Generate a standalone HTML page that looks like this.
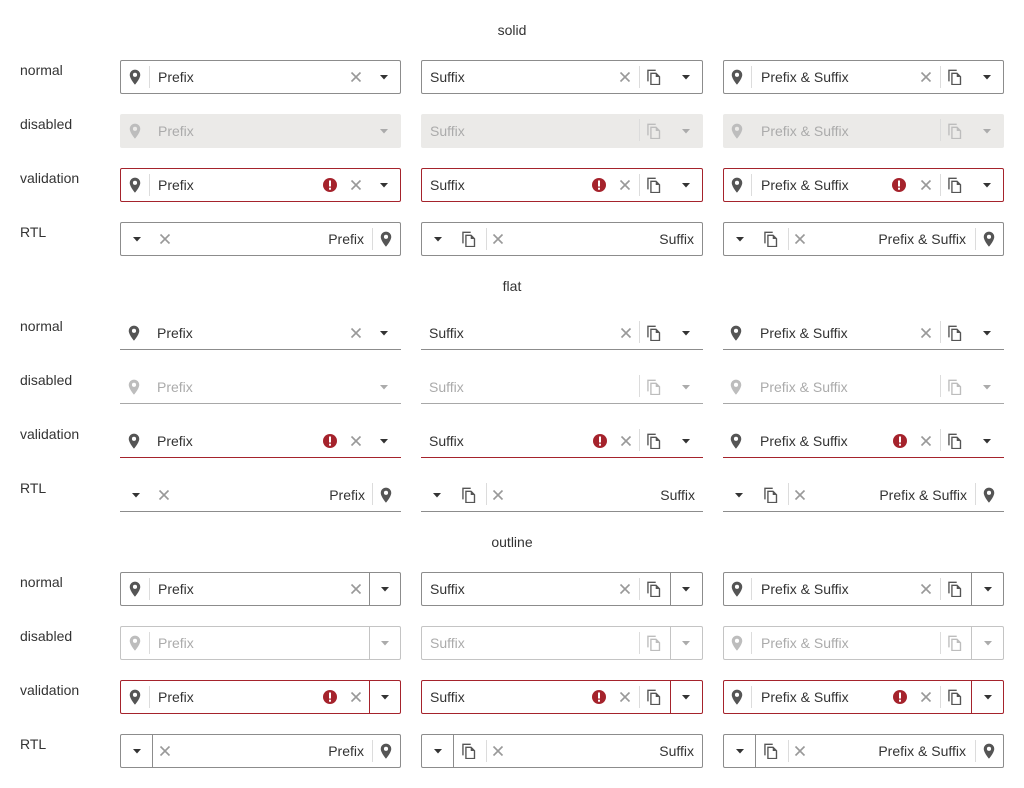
<!DOCTYPE html>
<html><head><meta charset="utf-8"><style>
body{margin:0;width:1024px;height:788px;background:#fff;font-family:"Liberation Sans",Arial,sans-serif;color:#333;position:relative;overflow:hidden}
.t{position:absolute;left:0;width:1024px;text-align:center;font-size:14px;line-height:16px}
.l{position:absolute;left:20px;font-size:14px;line-height:16px;color:#333}
.f{position:absolute;height:34px;box-sizing:border-box;font-size:14px}
.c1{left:120px;width:281px}.c2{left:421px;width:282px}.c3{left:723px;width:281px}
.solid{border:1px solid #8c8c8c;border-radius:2px}
.solid.d{border:none;background:#ebeae8}
.solid.d .tx{line-height:34px}
.solid.d svg{top:9px}
.flat{border-bottom:1px solid #8c8c8c}
.flat .tx{top:1px!important}
.flat svg{top:9px!important}
.flat.d{border-bottom-color:#a8a8a8}
.outline{border:1px solid #8c8c8c;border-radius:2px}
.outline.d{border-color:#c4c4c4}
.v{border-color:#a5232c!important}
.f svg{position:absolute;top:8px;width:16px;height:16px}
.f .tx{position:absolute;top:0;line-height:32px;white-space:nowrap}
.s{position:absolute;top:5px;height:22px;width:1px;background:#dcdcdc}
.S{position:absolute;top:0;bottom:0;width:1px;background:#8c8c8c}
.v .S{background:#a5232c}
.d .S{background:#c4c4c4}
.ic{color:#555}.xc{color:#999}.er{color:#a5232c}.ar{color:#333}
.d .ic,.d .xc,.d .ar,.d .tx{color:#ababab}
.d .ic{color:#bdbdbd}
</style></head><body>
<svg width="0" height="0" style="position:absolute">
<defs>
<symbol id="pin" viewBox="1 1 14 14"><path fill="currentColor" fill-rule="evenodd" d="M8 1.5a4.6 4.6 0 0 0-4.6 4.6c0 3.3 4.6 8.6 4.6 8.6s4.6-5.3 4.6-8.6A4.6 4.6 0 0 0 8 1.5zM8 4.3a1.8 1.8 0 1 1 0 3.6a1.8 1.8 0 1 1 0-3.6z"/></symbol>
<symbol id="x" viewBox="0 0 16 16"><path d="M3.5 3.5l9 9M12.5 3.5l-9 9" stroke="currentColor" stroke-width="1.6"/></symbol>
<symbol id="ar" viewBox="0 0 16 16"><path fill="currentColor" d="M4 6h8L8 10.5z"/></symbol>
<symbol id="cp" viewBox="1 1 14 14"><path fill="none" stroke="currentColor" stroke-width="1.2" d="M9.5 2.2H2.7v9.6M5.3 4.8h4.5l3 3v6.8H5.3z"/><path fill="currentColor" d="M9.5 4.8v3.2h3.2z"/></symbol>
<symbol id="er" viewBox="0 0 16 16"><circle cx="8" cy="8" r="7" fill="currentColor"/><rect x="7" y="3.5" width="2" height="6" fill="#fff"/><rect x="7" y="10.7" width="2" height="2" fill="#fff"/></symbol>
</defs></svg>

<div class="t" style="top:22px">solid</div>
<div class="t" style="top:278px">flat</div>
<div class="t" style="top:534px">outline</div>

<div class="l" style="top:62px">normal</div><div class="l" style="top:116px">disabled</div><div class="l" style="top:170px">validation</div><div class="l" style="top:224px">RTL</div>
<div class="l" style="top:318px">normal</div><div class="l" style="top:372px">disabled</div><div class="l" style="top:426px">validation</div><div class="l" style="top:480px">RTL</div>
<div class="l" style="top:574px">normal</div><div class="l" style="top:628px">disabled</div><div class="l" style="top:682px">validation</div><div class="l" style="top:736px">RTL</div>

<!-- ===== SOLID ===== -->
<div class="f solid c1" style="top:60px"><svg class="ic" style="left:6px"><use href="#pin"/></svg><span class="s" style="left:28px"></span><span class="tx" style="left:37px">Prefix</span><svg class="xc" style="left:227px"><use href="#x"/></svg><svg class="ar" style="left:255px"><use href="#ar"/></svg></div>
<div class="f solid c2" style="top:60px"><span class="tx" style="left:8px">Suffix</span><svg class="xc" style="left:195px"><use href="#x"/></svg><span class="s" style="left:217px"></span><svg class="ic" style="left:224px"><use href="#cp"/></svg><svg class="ar" style="left:256px"><use href="#ar"/></svg></div>
<div class="f solid c3" style="top:60px"><svg class="ic" style="left:5px"><use href="#pin"/></svg><span class="s" style="left:27px"></span><span class="tx" style="left:37px">Prefix &amp; Suffix</span><svg class="xc" style="left:194px"><use href="#x"/></svg><span class="s" style="left:216px"></span><svg class="ic" style="left:223px"><use href="#cp"/></svg><svg class="ar" style="left:255px"><use href="#ar"/></svg></div>

<div class="f solid d c1" style="top:114px"><svg class="ic" style="left:7px"><use href="#pin"/></svg><span class="tx" style="left:38px">Prefix</span><svg class="ar" style="left:256px"><use href="#ar"/></svg></div>
<div class="f solid d c2" style="top:114px"><span class="tx" style="left:9px">Suffix</span><span class="s" style="left:218px"></span><svg class="ic" style="left:225px"><use href="#cp"/></svg><svg class="ar" style="left:257px"><use href="#ar"/></svg></div>
<div class="f solid d c3" style="top:114px"><svg class="ic" style="left:6px"><use href="#pin"/></svg><span class="tx" style="left:38px">Prefix &amp; Suffix</span><span class="s" style="left:217px"></span><svg class="ic" style="left:224px"><use href="#cp"/></svg><svg class="ar" style="left:256px"><use href="#ar"/></svg></div>

<div class="f solid v c1" style="top:168px"><svg class="ic" style="left:6px"><use href="#pin"/></svg><span class="s" style="left:28px"></span><span class="tx" style="left:37px">Prefix</span><svg class="er" style="left:201px"><use href="#er"/></svg><svg class="xc" style="left:227px"><use href="#x"/></svg><svg class="ar" style="left:255px"><use href="#ar"/></svg></div>
<div class="f solid v c2" style="top:168px"><span class="tx" style="left:8px">Suffix</span><svg class="er" style="left:169px"><use href="#er"/></svg><svg class="xc" style="left:195px"><use href="#x"/></svg><span class="s" style="left:217px"></span><svg class="ic" style="left:224px"><use href="#cp"/></svg><svg class="ar" style="left:256px"><use href="#ar"/></svg></div>
<div class="f solid v c3" style="top:168px"><svg class="ic" style="left:5px"><use href="#pin"/></svg><span class="s" style="left:27px"></span><span class="tx" style="left:37px">Prefix &amp; Suffix</span><svg class="er" style="left:167px"><use href="#er"/></svg><svg class="xc" style="left:194px"><use href="#x"/></svg><span class="s" style="left:216px"></span><svg class="ic" style="left:223px"><use href="#cp"/></svg><svg class="ar" style="left:255px"><use href="#ar"/></svg></div>

<div class="f solid c1" style="top:222px"><svg class="ar" style="left:8px"><use href="#ar"/></svg><svg class="xc" style="left:36px"><use href="#x"/></svg><span class="tx" style="right:36px">Prefix</span><span class="s" style="left:251px"></span><svg class="ic" style="left:257px"><use href="#pin"/></svg></div>
<div class="f solid c2" style="top:222px"><svg class="ar" style="left:8px"><use href="#ar"/></svg><svg class="ic" style="left:39px"><use href="#cp"/></svg><span class="s" style="left:64px"></span><svg class="xc" style="left:68px"><use href="#x"/></svg><span class="tx" style="right:8px">Suffix</span></div>
<div class="f solid c3" style="top:222px"><svg class="ar" style="left:8px"><use href="#ar"/></svg><svg class="ic" style="left:39px"><use href="#cp"/></svg><span class="s" style="left:64px"></span><svg class="xc" style="left:68px"><use href="#x"/></svg><span class="tx" style="right:37px">Prefix &amp; Suffix</span><span class="s" style="left:251px"></span><svg class="ic" style="left:257px"><use href="#pin"/></svg></div>

<!-- ===== FLAT ===== -->
<div class="f flat c1" style="top:316px"><svg class="ic" style="left:6px"><use href="#pin"/></svg><span class="tx" style="left:37px">Prefix</span><svg class="xc" style="left:228px"><use href="#x"/></svg><svg class="ar" style="left:256px"><use href="#ar"/></svg></div>
<div class="f flat c2" style="top:316px"><span class="tx" style="left:8px">Suffix</span><svg class="xc" style="left:197px"><use href="#x"/></svg><span class="s" style="left:218px"></span><svg class="ic" style="left:225px"><use href="#cp"/></svg><svg class="ar" style="left:257px"><use href="#ar"/></svg></div>
<div class="f flat c3" style="top:316px"><svg class="ic" style="left:5px"><use href="#pin"/></svg><span class="tx" style="left:37px">Prefix &amp; Suffix</span><svg class="xc" style="left:195px"><use href="#x"/></svg><span class="s" style="left:217px"></span><svg class="ic" style="left:224px"><use href="#cp"/></svg><svg class="ar" style="left:256px"><use href="#ar"/></svg></div>

<div class="f flat d c1" style="top:370px"><svg class="ic" style="left:6px"><use href="#pin"/></svg><span class="tx" style="left:37px">Prefix</span><svg class="ar" style="left:256px"><use href="#ar"/></svg></div>
<div class="f flat d c2" style="top:370px"><span class="tx" style="left:8px">Suffix</span><span class="s" style="left:218px"></span><svg class="ic" style="left:225px"><use href="#cp"/></svg><svg class="ar" style="left:257px"><use href="#ar"/></svg></div>
<div class="f flat d c3" style="top:370px"><svg class="ic" style="left:5px"><use href="#pin"/></svg><span class="tx" style="left:37px">Prefix &amp; Suffix</span><span class="s" style="left:217px"></span><svg class="ic" style="left:224px"><use href="#cp"/></svg><svg class="ar" style="left:256px"><use href="#ar"/></svg></div>

<div class="f flat v c1" style="top:424px"><svg class="ic" style="left:6px"><use href="#pin"/></svg><span class="tx" style="left:37px">Prefix</span><svg class="er" style="left:202px"><use href="#er"/></svg><svg class="xc" style="left:228px"><use href="#x"/></svg><svg class="ar" style="left:256px"><use href="#ar"/></svg></div>
<div class="f flat v c2" style="top:424px"><span class="tx" style="left:8px">Suffix</span><svg class="er" style="left:171px"><use href="#er"/></svg><svg class="xc" style="left:197px"><use href="#x"/></svg><span class="s" style="left:218px"></span><svg class="ic" style="left:225px"><use href="#cp"/></svg><svg class="ar" style="left:257px"><use href="#ar"/></svg></div>
<div class="f flat v c3" style="top:424px"><svg class="ic" style="left:5px"><use href="#pin"/></svg><span class="tx" style="left:37px">Prefix &amp; Suffix</span><svg class="er" style="left:169px"><use href="#er"/></svg><svg class="xc" style="left:195px"><use href="#x"/></svg><span class="s" style="left:217px"></span><svg class="ic" style="left:224px"><use href="#cp"/></svg><svg class="ar" style="left:256px"><use href="#ar"/></svg></div>

<div class="f flat c1" style="top:478px"><svg class="ar" style="left:8px"><use href="#ar"/></svg><svg class="xc" style="left:36px"><use href="#x"/></svg><span class="tx" style="right:36px">Prefix</span><span class="s" style="left:252px"></span><svg class="ic" style="left:258px"><use href="#pin"/></svg></div>
<div class="f flat c2" style="top:478px"><svg class="ar" style="left:8px"><use href="#ar"/></svg><svg class="ic" style="left:40px"><use href="#cp"/></svg><span class="s" style="left:65px"></span><svg class="xc" style="left:69px"><use href="#x"/></svg><span class="tx" style="right:8px">Suffix</span></div>
<div class="f flat c3" style="top:478px"><svg class="ar" style="left:8px"><use href="#ar"/></svg><svg class="ic" style="left:40px"><use href="#cp"/></svg><span class="s" style="left:65px"></span><svg class="xc" style="left:69px"><use href="#x"/></svg><span class="tx" style="right:37px">Prefix &amp; Suffix</span><span class="s" style="left:252px"></span><svg class="ic" style="left:258px"><use href="#pin"/></svg></div>

<!-- ===== OUTLINE ===== -->
<div class="f outline c1" style="top:572px"><svg class="ic" style="left:6px"><use href="#pin"/></svg><span class="s" style="left:28px"></span><span class="tx" style="left:37px">Prefix</span><svg class="xc" style="left:227px"><use href="#x"/></svg><span class="S" style="left:248px"></span><svg class="ar" style="left:256px"><use href="#ar"/></svg></div>
<div class="f outline c2" style="top:572px"><span class="tx" style="left:8px">Suffix</span><svg class="xc" style="left:195px"><use href="#x"/></svg><span class="s" style="left:217px"></span><svg class="ic" style="left:224px"><use href="#cp"/></svg><span class="S" style="left:248px"></span><svg class="ar" style="left:256px"><use href="#ar"/></svg></div>
<div class="f outline c3" style="top:572px"><svg class="ic" style="left:5px"><use href="#pin"/></svg><span class="s" style="left:27px"></span><span class="tx" style="left:37px">Prefix &amp; Suffix</span><svg class="xc" style="left:194px"><use href="#x"/></svg><span class="s" style="left:216px"></span><svg class="ic" style="left:223px"><use href="#cp"/></svg><span class="S" style="left:247px"></span><svg class="ar" style="left:256px"><use href="#ar"/></svg></div>

<div class="f outline d c1" style="top:626px"><svg class="ic" style="left:6px"><use href="#pin"/></svg><span class="s" style="left:28px"></span><span class="tx" style="left:37px">Prefix</span><span class="S" style="left:248px"></span><svg class="ar" style="left:256px"><use href="#ar"/></svg></div>
<div class="f outline d c2" style="top:626px"><span class="tx" style="left:8px">Suffix</span><span class="s" style="left:217px"></span><svg class="ic" style="left:224px"><use href="#cp"/></svg><span class="S" style="left:248px"></span><svg class="ar" style="left:256px"><use href="#ar"/></svg></div>
<div class="f outline d c3" style="top:626px"><svg class="ic" style="left:5px"><use href="#pin"/></svg><span class="s" style="left:27px"></span><span class="tx" style="left:37px">Prefix &amp; Suffix</span><span class="s" style="left:216px"></span><svg class="ic" style="left:223px"><use href="#cp"/></svg><span class="S" style="left:247px"></span><svg class="ar" style="left:256px"><use href="#ar"/></svg></div>

<div class="f outline v c1" style="top:680px"><svg class="ic" style="left:6px"><use href="#pin"/></svg><span class="s" style="left:28px"></span><span class="tx" style="left:37px">Prefix</span><svg class="er" style="left:201px"><use href="#er"/></svg><svg class="xc" style="left:227px"><use href="#x"/></svg><span class="S" style="left:248px"></span><svg class="ar" style="left:256px"><use href="#ar"/></svg></div>
<div class="f outline v c2" style="top:680px"><span class="tx" style="left:8px">Suffix</span><svg class="er" style="left:169px"><use href="#er"/></svg><svg class="xc" style="left:195px"><use href="#x"/></svg><span class="s" style="left:217px"></span><svg class="ic" style="left:224px"><use href="#cp"/></svg><span class="S" style="left:248px"></span><svg class="ar" style="left:256px"><use href="#ar"/></svg></div>
<div class="f outline v c3" style="top:680px"><svg class="ic" style="left:5px"><use href="#pin"/></svg><span class="s" style="left:27px"></span><span class="tx" style="left:37px">Prefix &amp; Suffix</span><svg class="er" style="left:168px"><use href="#er"/></svg><svg class="xc" style="left:194px"><use href="#x"/></svg><span class="s" style="left:216px"></span><svg class="ic" style="left:223px"><use href="#cp"/></svg><span class="S" style="left:247px"></span><svg class="ar" style="left:256px"><use href="#ar"/></svg></div>

<div class="f outline c1" style="top:734px"><svg class="ar" style="left:8px"><use href="#ar"/></svg><span class="S" style="left:31px"></span><svg class="xc" style="left:36px"><use href="#x"/></svg><span class="tx" style="right:36px">Prefix</span><span class="s" style="left:251px"></span><svg class="ic" style="left:257px"><use href="#pin"/></svg></div>
<div class="f outline c2" style="top:734px"><svg class="ar" style="left:8px"><use href="#ar"/></svg><span class="S" style="left:31px"></span><svg class="ic" style="left:39px"><use href="#cp"/></svg><span class="s" style="left:64px"></span><svg class="xc" style="left:68px"><use href="#x"/></svg><span class="tx" style="right:8px">Suffix</span></div>
<div class="f outline c3" style="top:734px"><svg class="ar" style="left:8px"><use href="#ar"/></svg><span class="S" style="left:31px"></span><svg class="ic" style="left:39px"><use href="#cp"/></svg><span class="s" style="left:64px"></span><svg class="xc" style="left:68px"><use href="#x"/></svg><span class="tx" style="right:37px">Prefix &amp; Suffix</span><span class="s" style="left:251px"></span><svg class="ic" style="left:257px"><use href="#pin"/></svg></div>
</body></html>
